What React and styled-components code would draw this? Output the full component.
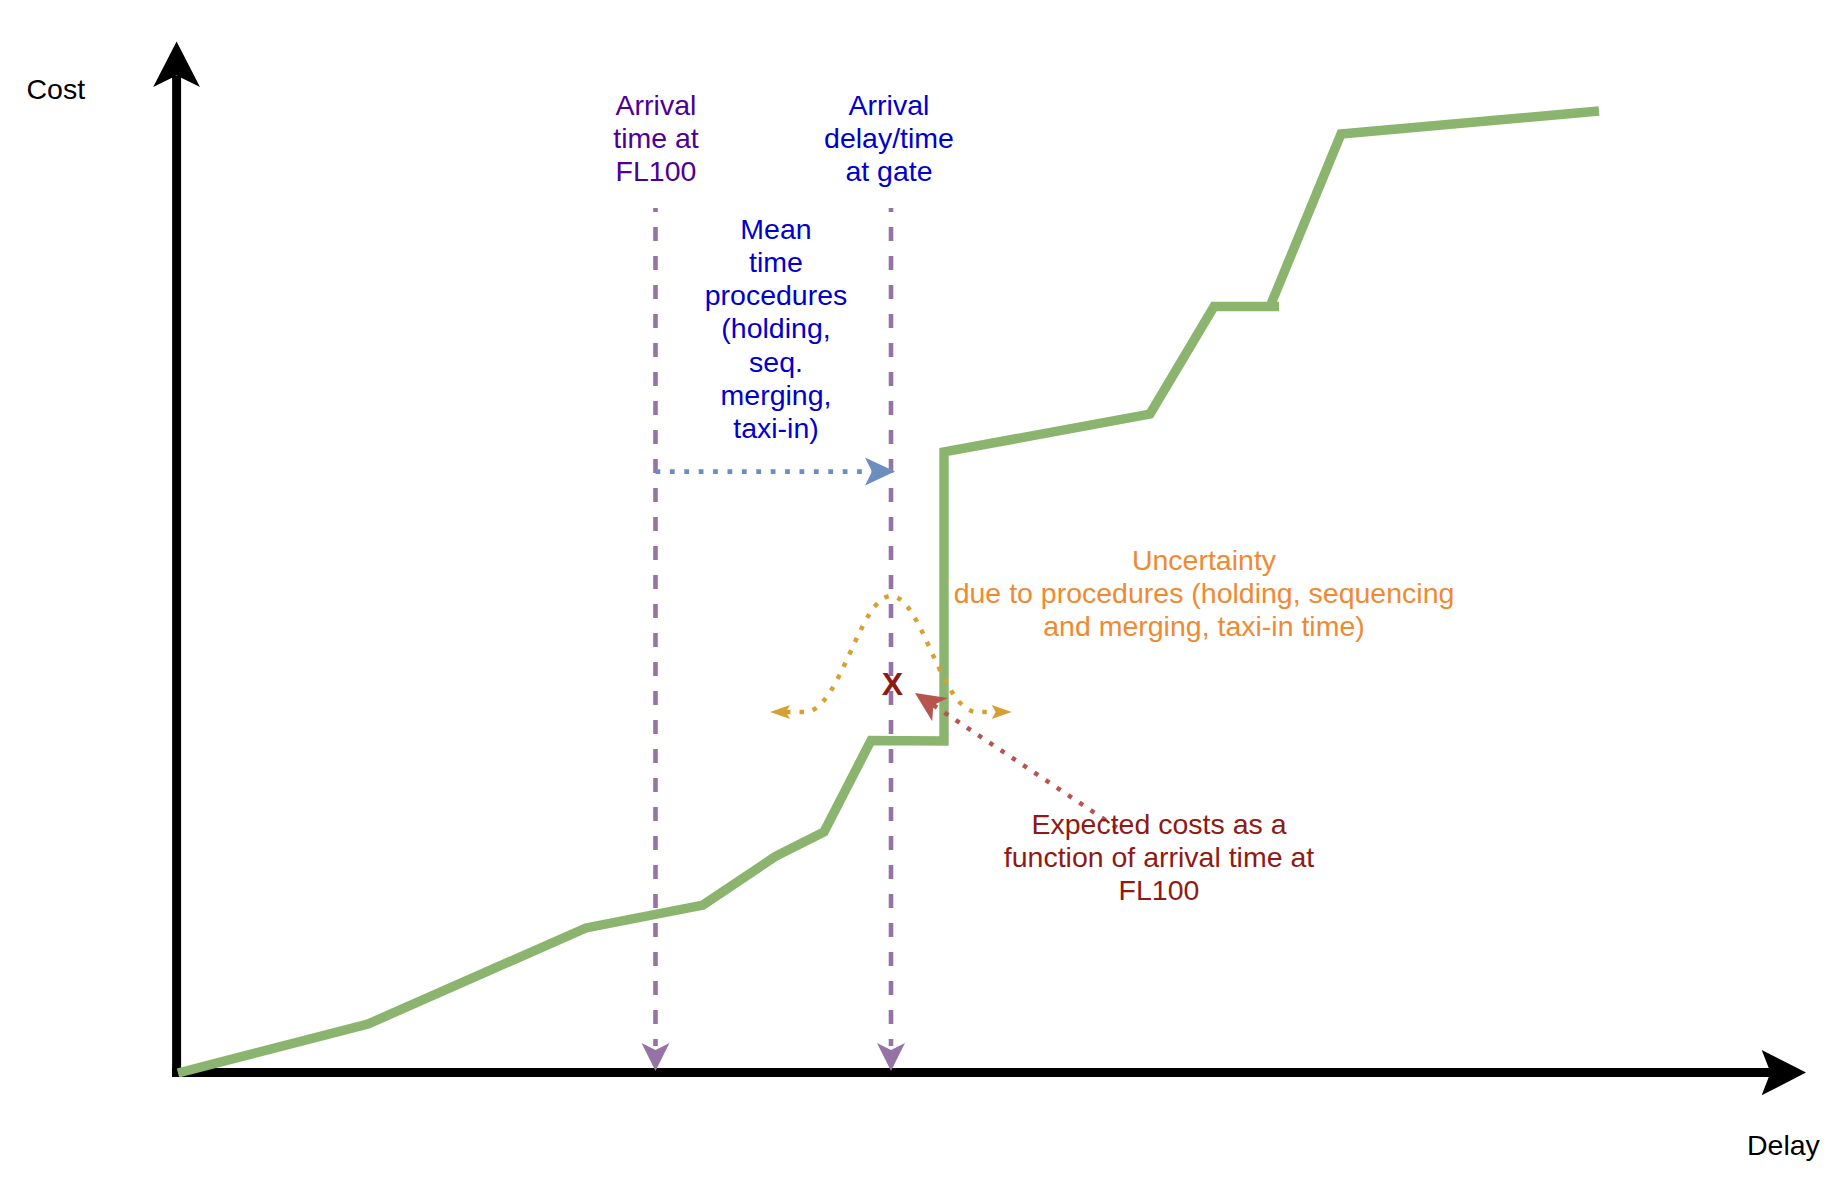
import React from "react";
import styled, { createGlobalStyle } from "styled-components";

const GlobalStyle = createGlobalStyle`
  html, body {
    margin: 0;
    padding: 0;
    background: #ffffff;
  }
  body {
    font-family: "Liberation Sans", Arial, Helvetica, sans-serif;
  }
`;

const Canvas = styled.div`
  position: relative;
  width: 1846px;
  height: 1186px;
  background: #ffffff;
  overflow: hidden;
`;

const Chart = styled.svg`
  display: block;
  width: 1846px;
  height: 1186px;
`;

// label text lines are centred on $x, first line centred on $y
const Label = styled.div`
  position: absolute;
  left: ${p => p.$x}px;
  top: ${p => p.$y - 16.5}px;
  transform: ${p => (p.$left ? "none" : "translateX(-50%)")};
  color: ${p => p.$color || "#000000"};
  font-family: "Liberation Sans", Arial, Helvetica, sans-serif;
  font-size: 28.5px;
  line-height: 33.3px;
  text-align: center;
  white-space: pre;
`;

const Mark = styled.div`
  position: absolute;
  left: ${p => p.$x}px;
  top: ${p => p.$y}px;
  transform: translate(-50%, -50%);
  color: #8f1a12;
  font-family: "Liberation Sans", Arial, Helvetica, sans-serif;
  font-size: 32px;
  font-weight: bold;
  line-height: 1;
`;

const GREEN = "#8bb46f";
const PURPLE = "#9673a6";
const BLUE_LINE = "#6c8ebf";
const GOLD = "#d6a032";
const BRICK = "#b85450";

const lowerCurve = [
  [178, 1073],
  [368, 1024],
  [586, 928],
  [703, 905],
  [776, 856],
  [824, 832],
  [871, 740.5],
  [944, 741],
  [944, 452],
  [1150, 414],
  [1214, 306.5],
  [1279, 306.5],
];

const upperCurve = [
  [1270, 306.5],
  [1341, 134],
  [1599, 111],
];

const pts = list => list.map(p => p.join(",")).join(" ");

function DropLine({ x }) {
  return (
    <g>
      <line
        x1={x}
        y1={208}
        x2={x}
        y2={1046}
        stroke={PURPLE}
        strokeWidth="4.6"
        strokeDasharray="14 15"
        strokeDashoffset="10"
      />
      <polygon
        points={`${x - 14},1043 ${x},1071 ${x + 14},1043 ${x},1050`}
        fill={PURPLE}
      />
    </g>
  );
}

function App() {
  return (
    <>
      <GlobalStyle />
      <Canvas>
        <Chart viewBox="0 0 1846 1186">
          {/* axes */}
          <line x1="176.6" y1="1077" x2="176.6" y2="76" stroke="#000" strokeWidth="9" />
          <polygon points="176.6,41.6 200,87 176.6,75.6 153.2,87" fill="#000" />
          <line x1="172" y1="1072.6" x2="1771" y2="1072.6" stroke="#000" strokeWidth="9" />
          <polygon points="1806,1072.6 1761.7,1049.9 1770.5,1072.6 1761.7,1095.3" fill="#000" />

          {/* cost curve */}
          <polyline
            points={pts(lowerCurve)}
            fill="none"
            stroke={GREEN}
            strokeWidth="9.4"
            strokeLinejoin="miter"
          />
          <polyline
            points={pts(upperCurve)}
            fill="none"
            stroke={GREEN}
            strokeWidth="9.4"
            strokeLinejoin="miter"
          />

          {/* arrival markers */}
          <DropLine x={655.5} />
          <DropLine x={891} />

          {/* mean time procedures */}
          <line
            x1="655.5"
            y1="471.6"
            x2="872"
            y2="471.6"
            stroke={BLUE_LINE}
            strokeWidth="4.8"
            strokeDasharray="4.8 9.6"
          />
          <polygon points="895,471.6 865,457.6 872,471.6 865,485.6" fill={BLUE_LINE} />

          {/* uncertainty bell */}
          <path
            d="M 786 712 L 805 712 C 840 712, 860 596, 891 596 C 922 596, 942 712, 977 712 L 996 712"
            fill="none"
            stroke={GOLD}
            strokeWidth="4.5"
            strokeDasharray="4.5 9"
          />
          <polygon points="770,712 790,705 786,712 790,719" fill={GOLD} />
          <polygon points="1011.7,712 991.7,705 995.7,712 991.7,719" fill={GOLD} />

          {/* expected cost pointer */}
          <line
            x1="933.3"
            y1="705.2"
            x2="1122"
            y2="831"
            stroke={BRICK}
            strokeWidth="4.5"
            strokeDasharray="4.5 9"
          />
          <polygon
            points="915,693 947.8,697.9 933.3,705.2 932.2,721.3"
            fill={BRICK}
          />
        </Chart>

        <Label $x={26.5} $y={89.6} $left>
          Cost
        </Label>
        <Label $x={1747} $y={1145} $left>
          Delay
        </Label>

        <Label $x={656} $y={105} $color="#4c0099">
          {"Arrival\ntime at\nFL100"}
        </Label>
        <Label $x={889} $y={105} $color="#0000cc">
          {"Arrival\ndelay/time\nat gate"}
        </Label>
        <Label $x={776} $y={229} $color="#0000cc">
          {"Mean\ntime\nprocedures\n(holding,\nseq.\nmerging,\ntaxi-in)"}
        </Label>
        <Label $x={1204} $y={560} $color="#f08a32">
          {"Uncertainty\ndue to procedures (holding, sequencing\nand merging, taxi-in time)"}
        </Label>
        <Label $x={1159} $y={824} $color="#8f1a14">
          {"Expected costs as a\nfunction of arrival time at\nFL100"}
        </Label>

        <Mark $x={892.5} $y={683.5}>X</Mark>
      </Canvas>
    </>
  );
}

export default App;
